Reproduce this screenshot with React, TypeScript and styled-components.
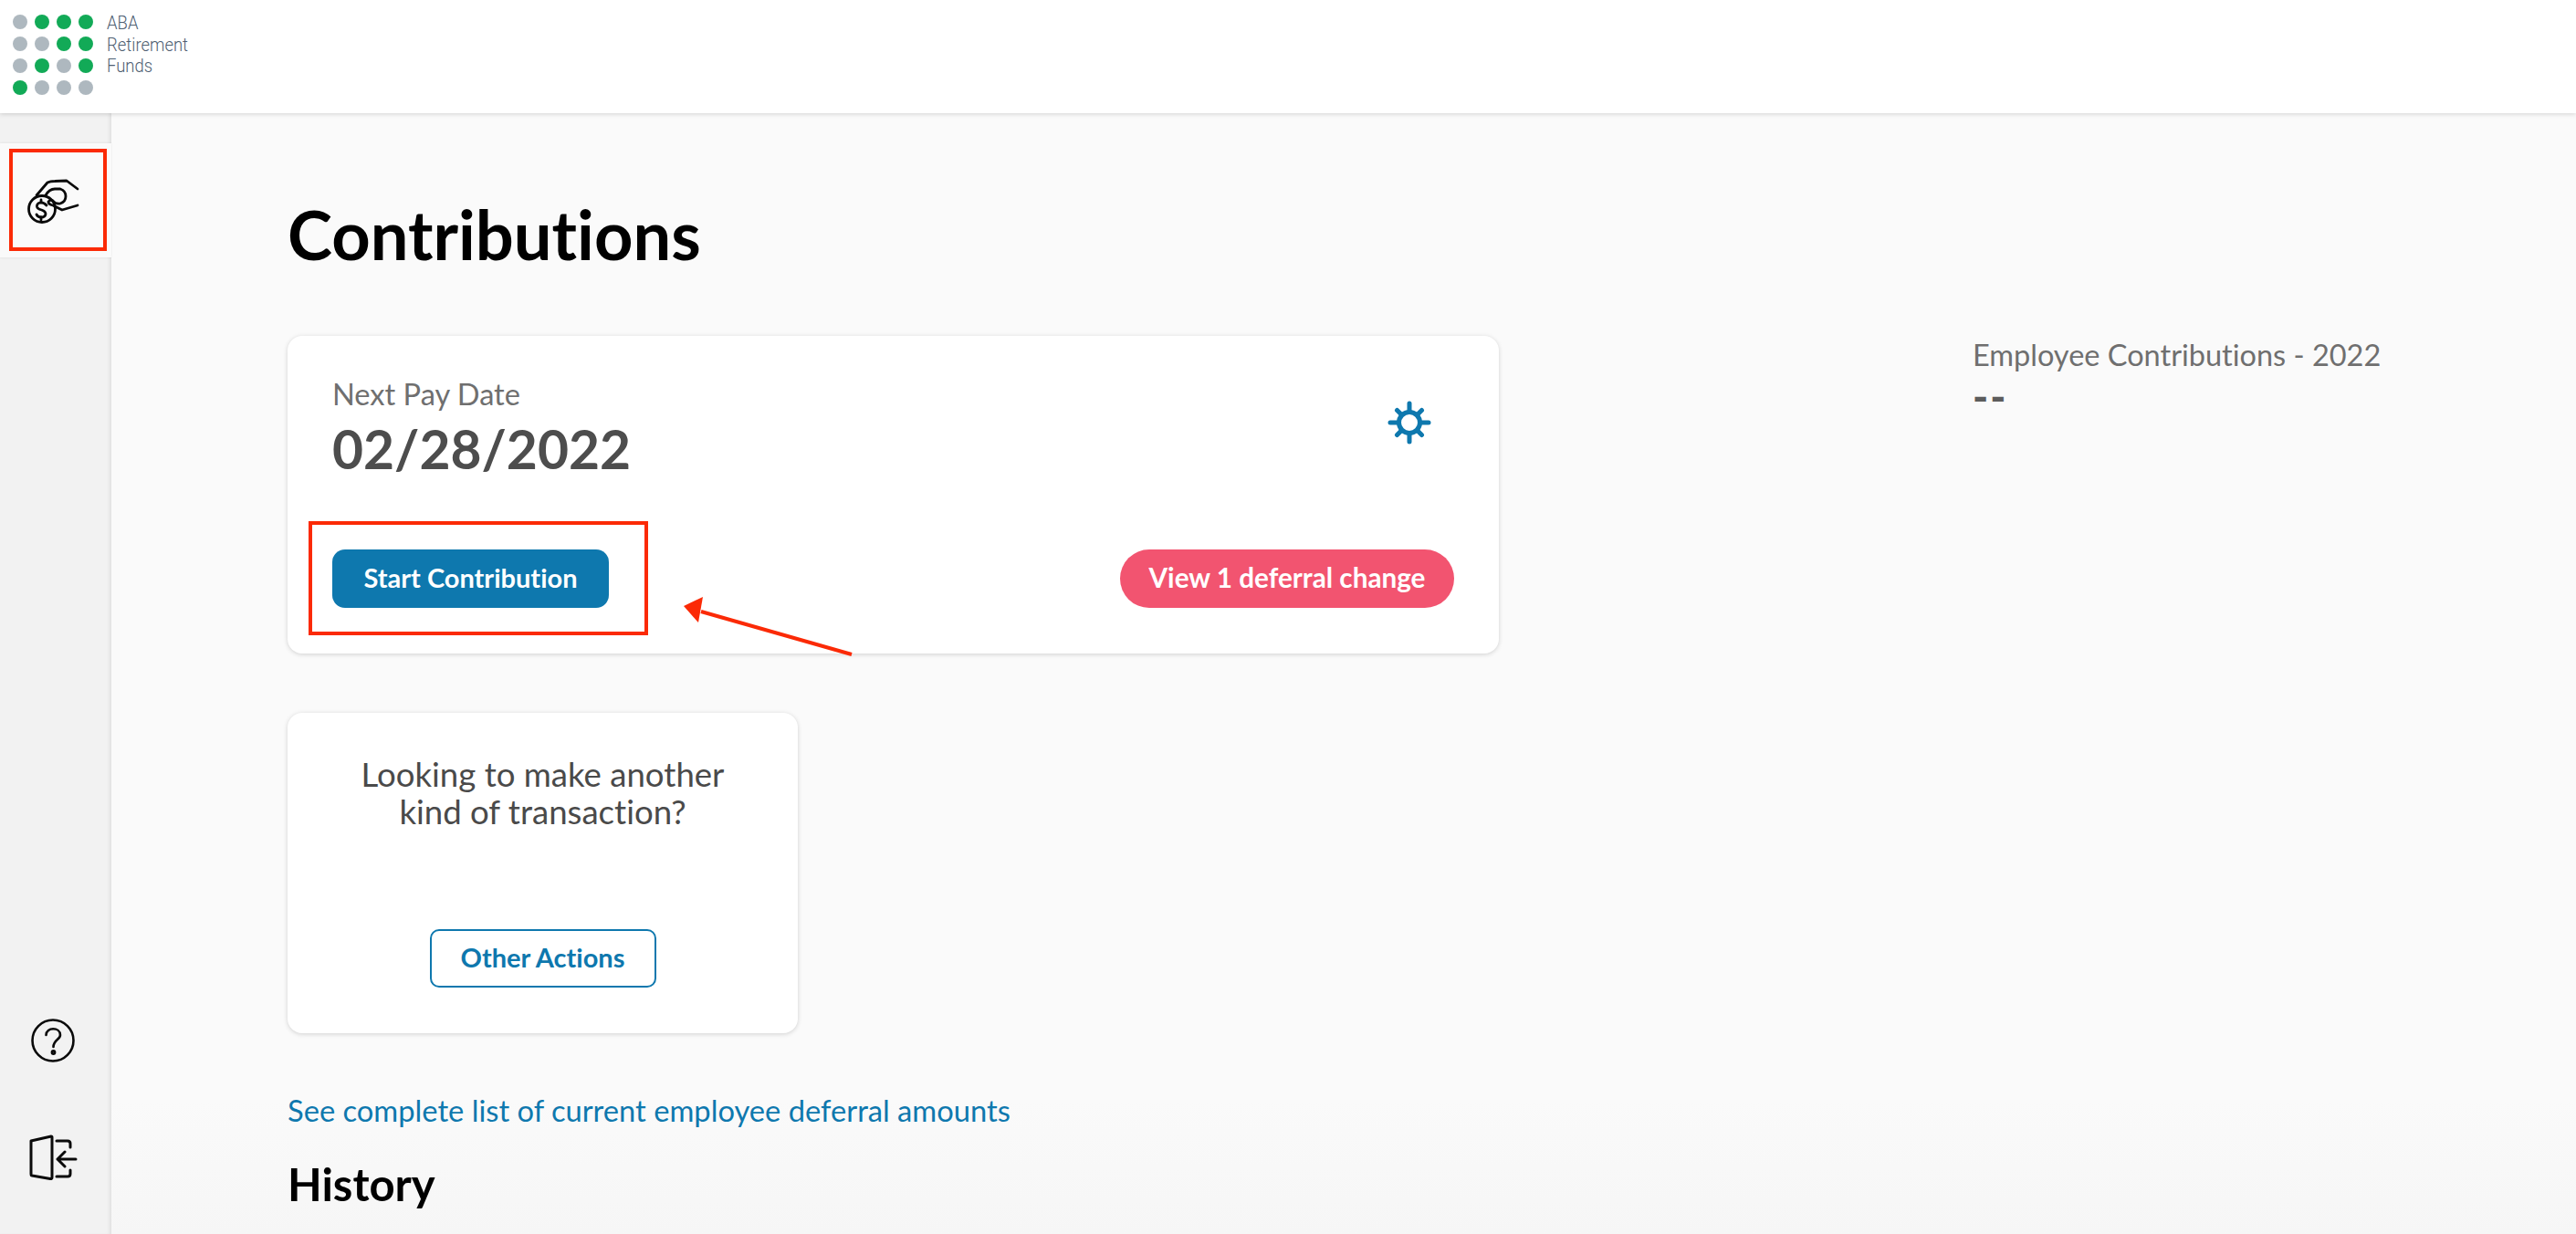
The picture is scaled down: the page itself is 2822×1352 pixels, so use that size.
import React from "react";
import styled, { createGlobalStyle } from "styled-components";

const Global = createGlobalStyle`
  html, body { margin: 0; padding: 0; height: 100%; overflow: hidden; }
  body {
    background: #fafafa;
    font-family: Lato, "Noto Sans", sans-serif;
    font-variant-ligatures: none;
  }
`;

const Shell = styled.div`
  position: relative;
  width: 2822px;
  height: 1352px;
  display: flex;
  flex-direction: column;
  overflow: hidden;
`;

const Header = styled.header`
  height: 124px;
  flex: none;
  background: #fff;
  box-shadow: 0 1px 5px rgba(0, 0, 0, 0.16);
  z-index: 2;
  display: flex;
  align-items: flex-start;
  padding: 12px 0 0 14px;
  box-sizing: border-box;
  gap: 15px;
`;

const DotGrid = styled.div`
  display: grid;
  grid-template-columns: repeat(4, 16px);
  grid-auto-rows: 16px;
  gap: 8px;
  padding-top: 4px;
`;

const Dot = styled.span<{ $on: boolean }>`
  border-radius: 50%;
  background: ${(p) => (p.$on ? "#12aa57" : "#aeb8bf")};
`;

const LogoText = styled.div`
  font-family: Roboto, sans-serif;
  font-weight: 300;
  font-size: 21px;
  line-height: 23.5px;
  color: #4f6072;
  padding-top: 2px;
  transform: scaleX(0.88);
  transform-origin: left center;
`;

const Body = styled.div`
  flex: 1;
  display: flex;
  min-height: 0;
`;

const Sidebar = styled.nav`
  width: 122px;
  flex: none;
  background: #f2f2f2;
  box-shadow: inset -4px 0 5px -3px rgba(0, 0, 0, 0.1);
  display: flex;
  flex-direction: column;
`;

const ActiveItem = styled.div`
  margin-top: 33px;
  height: 125px;
  background: #fafafa;
  box-shadow: 0 -1px 2px rgba(0, 0, 0, 0.05), 0 1px 2px rgba(0, 0, 0, 0.05);
  display: flex;
  align-items: center;
  justify-content: center;
  padding-right: 6px;
  box-sizing: border-box;
  position: relative;
`;

const RedFrame = styled.div`
  position: absolute;
  border: 4px solid #fb2a06;
  box-sizing: border-box;
`;

const ItemFrame = styled(RedFrame)`
  left: 10px;
  top: 6px;
  width: 107px;
  height: 112px;
`;

const SideFoot = styled.div`
  margin-top: auto;
  display: flex;
  flex-direction: column;
  align-items: center;
  padding: 0 6px 58px 0;
  gap: 78px;
`;

const Main = styled.main`
  flex: 1;
  padding: 92px 0 0 193px;
  display: flex;
  gap: 519px;
  min-width: 0;
  background: linear-gradient(to bottom, #fafafa 88%, #f6f6f6);
`;

const Left = styled.div`
  width: 1327px;
  flex: none;
`;

const Title = styled.h1`
  margin: 0;
  font-size: 74px;
  line-height: 82px;
  font-weight: 700;
  color: #000;
`;

const Card = styled.section`
  background: #fff;
  border-radius: 16px;
  box-shadow: 0 1px 5px rgba(0, 0, 0, 0.17);
  box-sizing: border-box;
`;

const PayCard = styled(Card)`
  margin-top: 70px;
  height: 348px;
  padding: 45px 49px 50px 49px;
  display: flex;
  flex-direction: column;
  position: relative;
`;

const PayTop = styled.div`
  display: flex;
  justify-content: space-between;
  align-items: flex-start;
  flex: 1;
`;

const PayLabel = styled.div`
  font-size: 32.6px;
  line-height: 38px;
  color: #6f6f6f;
`;

const PayDate = styled.div`
  margin-top: 5px;
  font-size: 58.7px;
  line-height: 72px;
  font-weight: 700;
  color: #4d4d4d;
`;

const GearWrap = styled.div`
  padding: 26px 0 0 0;
  margin-right: 25px;
  color: #0e78ae;
  display: flex;
`;

const PayActions = styled.div`
  display: flex;
  justify-content: space-between;
  align-items: center;
  position: relative;
`;

const ButtonFrame = styled(RedFrame)`
  left: -26px;
  top: -31px;
  width: 372px;
  height: 125px;
`;

const Solid = styled.button<{ $bg: string; $radius: number; $w: number; $size: number }>`
  height: 64px;
  width: ${(p) => p.$w}px;
  border: 0;
  padding: 0 0 3px;
  background: ${(p) => p.$bg};
  border-radius: ${(p) => p.$radius}px;
  color: #fff;
  font-family: inherit;
  font-variant-ligatures: none;
  font-weight: 700;
  font-size: ${(p) => p.$size}px;
`;

const OtherCard = styled(Card)`
  margin-top: 65px;
  width: 559px;
  height: 351px;
  padding: 47px 30px 50px;
  display: flex;
  flex-direction: column;
  align-items: center;
  text-align: center;
`;

const OtherText = styled.div`
  font-size: 36.6px;
  line-height: 41px;
  color: #4a4a4a;
`;

const Outline = styled.button`
  margin-top: auto;
  width: 248px;
  height: 64px;
  background: #fff;
  border: 2px solid #0e78ae;
  border-radius: 10px;
  color: #0e78ae;
  font-family: inherit;
  font-variant-ligatures: none;
  font-weight: 700;
  font-size: 29px;
  padding: 0 0 4px;
`;

const SeeAll = styled.a`
  display: block;
  margin-top: 64px;
  font-size: 32.7px;
  line-height: 42px;
  color: #0e78ae;
`;

const History = styled.h2`
  margin: 29px 0 0;
  font-size: 49px;
  line-height: 60px;
  font-weight: 700;
  color: #000;
`;

const Right = styled.aside`
  padding-top: 152px;
`;

const StatLabel = styled.div`
  font-size: 32.5px;
  line-height: 42px;
  color: #6f6f6f;
`;

const StatValue = styled.div`
  font-size: 46px;
  line-height: 48px;
  font-weight: 900;
  letter-spacing: 2px;
  color: #5c5c5c;
`;

const Arrow = styled.svg`
  position: absolute;
  left: 0;
  top: 0;
  pointer-events: none;
  z-index: 3;
`;

const dots = ["0111", "0011", "0101", "1000"];

const HandCoin = () => (
  <svg width="60" height="50" viewBox="28 194 60 50" fill="none" stroke="#0a0a0a" strokeWidth="2.800" strokeLinecap="round" strokeLinejoin="round">
    <circle cx="46" cy="228" r="14.500" />
    <path d="M40 213 L52 199 Q55 197.500 60 197.500 L73 197 L85 206" />
    <path d="M50 213 Q54 206 60 206 L66 206 Q72 208 72 214 Q72 220 66 222 Q61 223 58 219 Q55 217 53 220 Q53 223 58 224 L62 226 L68 229 L85 224" />
    <path d="M51 224 Q48 220.500 44 221 Q40 222 40.500 225.500 Q41 228 45.500 229 Q50 230.500 50 233.500 Q49.500 237 45 237 Q41.500 237 40 234" />
    <path d="M45 218 V221 M45 237 V240" />
  </svg>
);

const Help = () => (
  <svg width="48" height="48" viewBox="0 0 48 48" fill="none" stroke="#0a0a0a" strokeWidth="2.600" strokeLinecap="round" strokeLinejoin="round">
    <circle cx="24" cy="24" r="22.500" />
    <path d="M16.500 18 C16.500 9 32 9 32 18 C32 23 24.500 23.500 24.500 31" />
    <circle cx="24.500" cy="37" r="1.600" />
  </svg>
);

const Exit = () => (
  <svg width="54" height="52" viewBox="0 0 54 52" fill="none" stroke="#0a0a0a" strokeWidth="3" strokeLinecap="round" strokeLinejoin="round">
    <path d="M3 8 L25 3 Q26 3 26 4 V48 Q26 50 24 49.500 L4 46 Q3 46 3 44 Z" />
    <path d="M31 8 H43 Q46 8 46 11 V15" />
    <path d="M31 47 H43 Q46 47 46 44 V40" />
    <path d="M52 28 H32 M40 20 L32 28 L40 36" />
  </svg>
);

const Gear = () => (
  <svg width="48" height="48" viewBox="0 0 48 48" fill="none" stroke="currentColor" strokeWidth="5" strokeLinecap="round">
    <circle cx="24" cy="24" r="11.500" />
    <path d="M24 3 V12 M24 36 V45 M3 24 H12 M36 24 H45 M10.500 10.500 L15.500 15.500 M32.500 32.500 L37.500 37.500 M10.500 37.500 L15.500 32.500 M32.500 15.500 L37.500 10.500" />
  </svg>
);

export default function App() {
  return (
    <Shell>
      <Global />
      <Header>
        <DotGrid>
          {dots.flatMap((row, r) =>
            row.split("").map((c, i) => <Dot key={`${r}-${i}`} $on={c === "1"} />)
          )}
        </DotGrid>
        <LogoText>
          ABA
          <br />
          Retirement
          <br />
          Funds
        </LogoText>
      </Header>
      <Body>
        <Sidebar>
          <ActiveItem>
            <ItemFrame />
            <HandCoin />
          </ActiveItem>
          <SideFoot>
            <Help />
            <Exit />
          </SideFoot>
        </Sidebar>
        <Main>
          <Left>
            <Title>Contributions</Title>
            <PayCard>
              <PayTop>
                <div>
                  <PayLabel>Next Pay Date</PayLabel>
                  <PayDate>02/28/2022</PayDate>
                </div>
                <GearWrap>
                  <Gear />
                </GearWrap>
              </PayTop>
              <PayActions>
                <ButtonFrame />
                <Solid $bg="#0e78ae" $radius={14} $w={303} $size={29}>Start Contribution</Solid>
                <Solid $bg="#f25470" $radius={32} $w={366} $size={29.7}>View 1 deferral change</Solid>
              </PayActions>
            </PayCard>
            <OtherCard>
              <OtherText>
                Looking to make another
                <br />
                kind of transaction?
              </OtherText>
              <Outline>Other Actions</Outline>
            </OtherCard>
            <SeeAll>See complete list of current employee deferral amounts</SeeAll>
            <History>History</History>
          </Left>
          <Right>
            <StatLabel>Employee Contributions - 2022</StatLabel>
            <StatValue>--</StatValue>
          </Right>
        </Main>
      </Body>
      <Arrow width="2822" height="1352" viewBox="0 0 2822 1352">
        <path d="M933 717 L768 670" stroke="#fb2a06" strokeWidth="4" fill="none" />
        <path d="M749 664 L770 654 L765 682 Z" fill="#fb2a06" />
      </Arrow>
    </Shell>
  );
}
